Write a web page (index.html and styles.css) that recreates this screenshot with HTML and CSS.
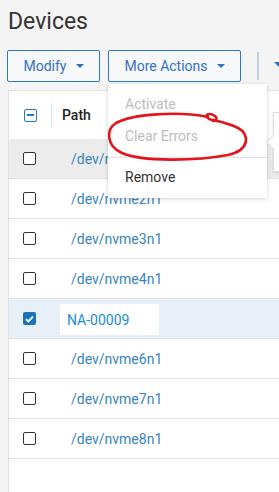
FILE: index.html
```html
<!DOCTYPE html>
<html>
<head>
<meta charset="utf-8">
<link rel="stylesheet" href="styles.css">
</head>
<body>
<div class="page">
  <h1 class="title">Devices</h1>
  <div class="toolbar">
    <button class="btn btn-modify">Modify <span class="caret"></span></button>
    <button class="btn btn-more">More Actions <span class="caret"></span></button>
    <span class="sep"></span>
    <span class="caret caret-lg"></span>
  </div>
  <div class="card">
    <div class="thead">
      <div class="cell-check"><span class="cb cb-ind"></span></div>
      <div class="th-divider"></div>
      <div class="th-path">Path</div>
    </div>
    <div class="row row-hover"><div class="cell-check"><span class="cb"></span></div><div class="cell-path">/dev/nvme1n1</div></div>
    <div class="row"><div class="cell-check"><span class="cb"></span></div><div class="cell-path">/dev/nvme2n1</div></div>
    <div class="row"><div class="cell-check"><span class="cb"></span></div><div class="cell-path">/dev/nvme3n1</div></div>
    <div class="row"><div class="cell-check"><span class="cb"></span></div><div class="cell-path">/dev/nvme4n1</div></div>
    <div class="row row-selected"><div class="cell-check"><span class="cb cb-on"><svg width="9" height="8" viewBox="0 0 9 8"><path d="M1 4.2 L3.4 6.4 L8 1.6" fill="none" stroke="#fff" stroke-width="2"/></svg></span></div><div class="cell-edit"><span class="edit-box">NA-00009</span></div></div>
    <div class="row"><div class="cell-check"><span class="cb"></span></div><div class="cell-path">/dev/nvme6n1</div></div>
    <div class="row"><div class="cell-check"><span class="cb"></span></div><div class="cell-path">/dev/nvme7n1</div></div>
    <div class="row"><div class="cell-check"><span class="cb"></span></div><div class="cell-path">/dev/nvme8n1</div></div>
    <div class="filler"></div>
  </div>
</div>

<div class="menu">
  <div class="menu-item disabled">Activate</div>
  <div class="menu-item disabled">Clear Errors</div>
  <div class="menu-divider"></div>
  <div class="menu-item">Remove</div>
</div>

<div class="popover"><span class="popover-arrow"></span></div>

<svg class="scribble" width="279" height="492" viewBox="0 0 279 492">
  <path d="M208 117 C178 111 132 114 116 123 C106 129 106 146 122 153 C142 162 196 161 228 155 C250 150 250 134 238 128 C228 123 216 121 209 119 C203 115 209 112 215 116 C218 119 216 121 213 121"
        fill="none" stroke="#e3141b" stroke-width="2.6" stroke-linecap="round" stroke-linejoin="round"/>
</svg>
</body>
</html>
```

FILE: styles.css
```css
* { box-sizing: border-box; }
html, body {
  margin: 0;
  padding: 0;
  background: #f4f4f4;
  font-family: Roboto, "Liberation Sans", sans-serif;
  overflow: hidden;
  width: 279px;
  height: 492px;
}
.page {
  display: flex;
  flex-direction: column;
  height: 492px;
}
.title {
  margin: 0;
  padding: 8px 0 0 8px;
  font-size: 23px;
  line-height: 28px;
  font-weight: 400;
  color: #333;
}
.toolbar {
  display: flex;
  align-items: center;
  margin-top: 14px;
  padding-left: 7px;
  height: 32px;
  white-space: nowrap;
}
.btn {
  height: 32px;
  border: 1px solid #2b78d3;
  border-radius: 2px;
  background: #f6f8fa;
  color: #3571c4;
  font-family: Roboto, "Liberation Sans", sans-serif;
  font-size: 14px;
  display: flex;
  align-items: center;
  justify-content: center;
  gap: 9px;
  padding: 0;
  flex: none;
}
.btn-modify { width: 93px; }
.btn-more { width: 133px; margin-left: 8px; }
.caret {
  display: inline-block;
  width: 0;
  height: 0;
  border-left: 4px solid transparent;
  border-right: 4px solid transparent;
  border-top: 4px solid #2f6fc4;
}
.sep {
  width: 2px;
  height: 28px;
  background: #c3d0dc;
  margin-left: 16px;
  flex: none;
}
.caret-lg {
  margin-left: 15px;
  border-left-width: 5px;
  border-right-width: 5px;
  border-top-width: 5px;
  margin-top: -4px;
  flex: none;
}
.card {
  margin: 8px 0 0 8px;
  flex: 1;
  background: #fff;
  border-top: 1px solid #e2e2e2;
  border-left: 1px solid #e2e2e2;
  display: flex;
  flex-direction: column;
}
.thead {
  height: 48px;
  display: flex;
  align-items: center;
}
.cell-check {
  width: 51px;
  flex: none;
  display: flex;
  align-items: center;
  padding-left: 14px;
}
.thead .cell-check { width: 42px; padding-left: 15px; }
.th-divider {
  width: 1px;
  height: 24px;
  background: #e0e0e0;
}
.th-path {
  padding-left: 10px;
  font-size: 14px;
  font-weight: 500;
  color: #222;
}
.cb {
  width: 13px;
  height: 13px;
  border: 1.5px solid #333;
  border-radius: 2px;
  background: #fff;
  display: inline-flex;
  align-items: center;
  justify-content: center;
}
.cb-ind {
  border-color: #1f78d1;
}
.cb-ind::after {
  content: "";
  width: 7px;
  height: 1.5px;
  background: #1f78d1;
}
.cb-on {
  border: none;
  background: #1b73bb;
}
.row {
  height: 40px;
  border-bottom: 1px solid #e3e3e3;
  display: flex;
  align-items: center;
}
.row-hover { background: #ececec; }
.row-selected { background: #e7f0f9; }
.cell-path {
  padding-left: 11px;
  font-size: 14px;
  color: #3784c6;
  white-space: nowrap;
}
.cell-edit {
  padding-left: 0;
}
.edit-box {
  display: flex;
  align-items: center;
  width: 99px;
  height: 31px;
  background: #fff;
  padding-left: 7px;
  margin-top: 2px;
  font-size: 14px;
  color: #1a8cd6;
}
.filler { flex: 1; }

.menu {
  position: absolute;
  left: 108px;
  top: 84px;
  width: 159px;
  height: 114px;
  background: #fff;
  box-shadow: 0 1px 4px rgba(0,0,0,0.18);
  padding-top: 4px;
}
.menu-item {
  height: 32px;
  display: flex;
  align-items: center;
  padding-left: 17px;
  font-size: 14px;
  color: #333;
}
.menu-item.disabled { color: #bdbdbd; }
.menu-divider {
  height: 1px;
  background: #e2e2e2;
  margin: 5px 0 3px;
}
.popover {
  position: absolute;
  left: 273px;
  top: 112px;
  width: 20px;
  height: 60px;
  background: #fff;
  border: 1px solid #dcdcdc;
  box-shadow: 0 1px 3px rgba(0,0,0,0.1);
}
.popover-arrow {
  position: absolute;
  left: -6px;
  top: 24px;
  width: 10px;
  height: 10px;
  background: #fff;
  border-left: 1px solid #dcdcdc;
  border-bottom: 1px solid #dcdcdc;
  transform: rotate(45deg);
}
.scribble {
  position: absolute;
  left: 0;
  top: 0;
  pointer-events: none;
}
```
